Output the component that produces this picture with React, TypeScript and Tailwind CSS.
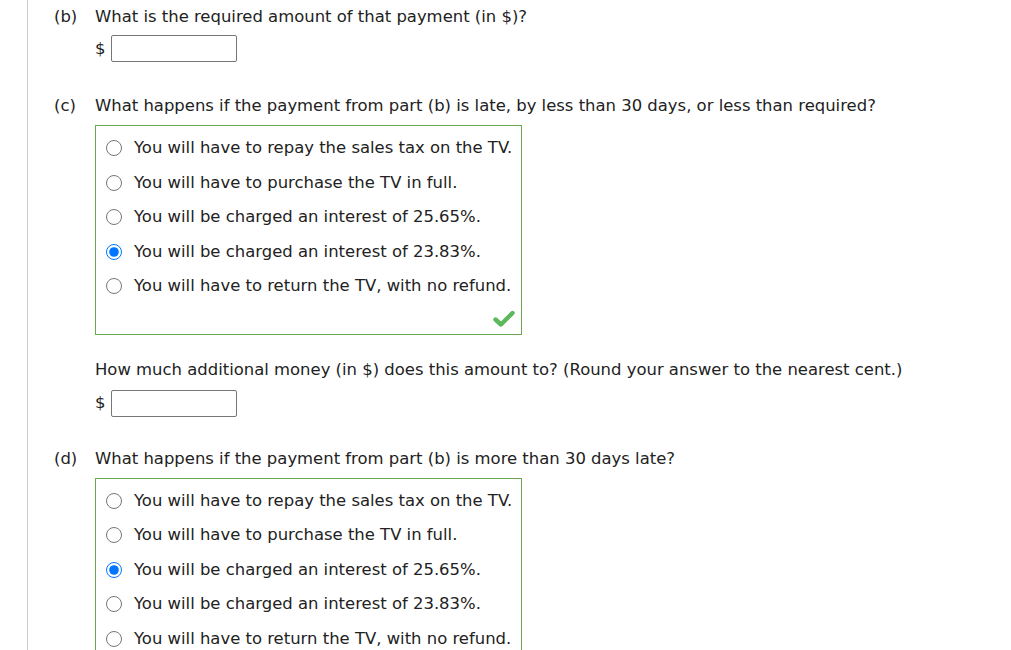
import React from 'react'

const options = [
  'You will have to repay the sales tax on the TV.',
  'You will have to purchase the TV in full.',
  'You will be charged an interest of 25.65%.',
  'You will be charged an interest of 23.83%.',
  'You will have to return the TV, with no refund.',
]

function Check() {
  return (
    <svg width="22" height="18" viewBox="0 0 22 18" className="block">
      <path d="M2.5 9.5 L8 14.5 L19.5 3" fill="none" stroke="#5cb85c" strokeWidth="4.4" strokeLinecap="round" strokeLinejoin="round" />
    </svg>
  )
}

function AmountInput() {
  return (
    <div className="flex items-center h-[27px]">
      <span className="w-[16px] text-[#222]">$</span>
      <input type="text" className="w-[126px] h-[27px] border border-[#767676] rounded-[2px] bg-white outline-none" />
    </div>
  )
}

function Choices({ name, selected, correct }: { name: string; selected: number; correct?: boolean }) {
  return (
    <div className="w-[427px] border border-[#6aa84f] pt-[5px] pl-[10px]">
      {options.map((o, i) => (
        <label key={i} className="flex items-center h-[34.5px] gap-[12px] cursor-pointer">
          <input
            type="radio"
            name={name}
            defaultChecked={i === selected}
            className="w-[16px] h-[16px] m-0 shrink-0"
          />
          <span className="text-[#222]">{o}</span>
        </label>
      ))}
      {correct && (
        <div className="flex justify-end h-[30px] pr-[6px] pt-[6px]">
          <Check />
        </div>
      )}
    </div>
  )
}

export default function App() {
  return (
    <div className="h-[650px] w-[1011px] overflow-hidden bg-white text-[16.45px] leading-[20px] text-[#222]" style={{ fontFamily: '"DejaVu Sans", Verdana, sans-serif' }}>
      <div className="ml-[27px] h-full border-l border-[#cccccc] pl-[26px]">
        {/* part b */}
        <div className="flex pt-[7px]">
          <span className="w-[41px] shrink-0">(b)</span>
          <div>
            <div>What is the required amount of that payment (in $)?</div>
            <div className="mt-[8px]">
              <AmountInput />
            </div>
          </div>
        </div>

        {/* part c */}
        <div className="flex mt-[34px]">
          <span className="w-[41px] shrink-0">(c)</span>
          <div>
            <div>What happens if the payment from part (b) is late, by less than 30 days, or less than required?</div>
            <div className="mt-[9px]">
              <Choices name="c" selected={3} correct />
            </div>
            <div className="mt-[25px]">How much additional money (in $) does this amount to? (Round your answer to the nearest cent.)</div>
            <div className="mt-[10px]">
              <AmountInput />
            </div>
          </div>
        </div>

        {/* part d */}
        <div className="flex mt-[32px]">
          <span className="w-[41px] shrink-0">(d)</span>
          <div>
            <div>What happens if the payment from part (b) is more than 30 days late?</div>
            <div className="mt-[9px]">
              <Choices name="d" selected={2} />
            </div>
          </div>
        </div>
      </div>
    </div>
  )
}
